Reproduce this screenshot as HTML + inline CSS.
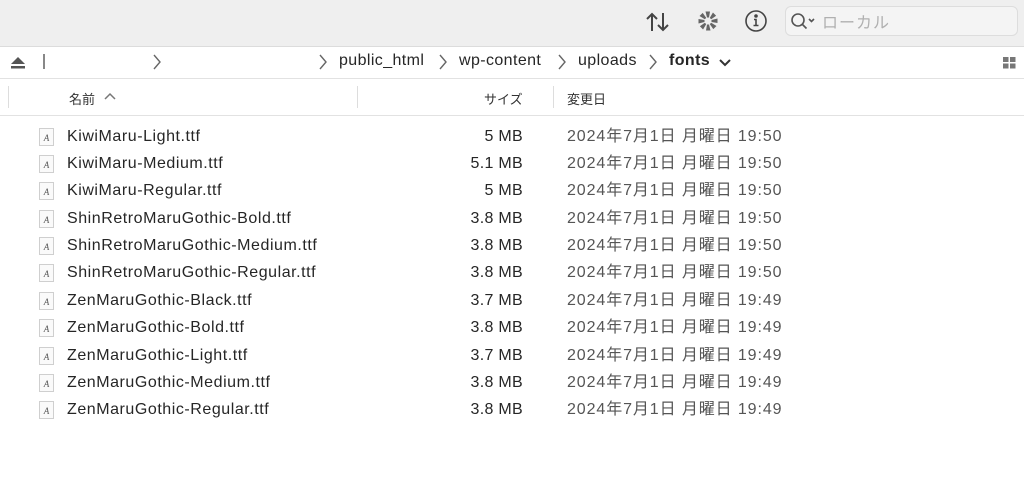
<!DOCTYPE html><html><head><meta charset="utf-8"><style>
body{margin:0;width:1024px;height:489px;background:#fff;font-family:"Liberation Sans","Noto Sans CJK JP",sans-serif;color:#262626;position:relative;overflow:hidden}
.a{position:absolute;white-space:nowrap}
.tb{position:absolute;left:0;top:0;width:1024px;height:46px;background:#efefef;border-bottom:1px solid #dcdcdc}
.pb{position:absolute;left:0;top:47px;width:1024px;height:31px;border-bottom:1px solid #e2e2e2;font-size:16px;letter-spacing:0.4px}
.hd{font-size:13px;color:#333}
.row{position:absolute;left:0;height:27px;font-size:16px;letter-spacing:0.55px;line-height:27px;width:1024px}
.ic{position:absolute;left:39px;top:5px;width:15px;height:18px;border:1px solid #cfcfcf;background:#fafafa;box-sizing:border-box;font:italic 9px "Liberation Serif",serif;color:#555;text-align:center;line-height:18px;letter-spacing:0}
.n{position:absolute;left:67px}.s{position:absolute;right:501px;letter-spacing:0.3px}.d{position:absolute;left:567px;color:#555;letter-spacing:0.9px}
.ch{position:absolute;top:7px}
</style></head><body>
<div class="tb">
<svg class="a" style="left:645px;top:11px" width="26" height="22" viewBox="0 0 26 22" fill="none" stroke="#444" stroke-width="2"><path d="M7 20V3M2 8l5-5 5 5M18 2v17M13 14l5 5 5-5"/></svg>
<svg class="a" style="left:697px;top:10px" width="22" height="22" viewBox="0 0 22 22" fill="#666"><g transform="translate(11 11)"><g id="p"><path d="M-1 -3.5 L-2.5 -9.5 L2 -9.5 L1 -3.5Z"/></g><use href="#p" transform="rotate(45)"/><use href="#p" transform="rotate(90)"/><use href="#p" transform="rotate(135)"/><use href="#p" transform="rotate(180)"/><use href="#p" transform="rotate(225)"/><use href="#p" transform="rotate(270)"/><use href="#p" transform="rotate(315)"/></g></svg>
<svg class="a" style="left:744px;top:9px" width="24" height="24" viewBox="0 0 24 24" fill="none" stroke="#444" stroke-width="1.6"><circle cx="12" cy="12" r="10"/><path d="M10 10.5h2v6M9.5 16.5h5"/><circle cx="12" cy="7" r="1" fill="#444"/></svg>
<div class="a" style="left:785px;top:6px;width:231px;height:28px;border:1px solid #ddd;border-radius:6px;background:#f4f4f4"></div>
<svg class="a" style="left:790px;top:12px" width="26" height="18" viewBox="0 0 26 18" fill="none" stroke="#555" stroke-width="1.6"><circle cx="8" cy="8" r="6"/><path d="M12.5 12.5l4 4M19 7l2.5 2.5L24 7"/></svg>
<div class="a" style="left:822px;top:9px;font-size:16px;color:#b0b0b0;letter-spacing:1px">ローカル</div>
</div>
<div class="pb">
<svg class="a" style="left:10px;top:9px" width="16" height="14" viewBox="0 0 16 14" fill="#555"><path d="M8 1L15 8H1Z"/><rect x="1" y="10" width="14" height="2.5"/></svg>
<div class="a" style="left:43px;top:7px;width:1.5px;height:15px;background:#888"></div>
<svg class="ch" style="left:152px" width="10" height="16" fill="none" stroke="#666" stroke-width="1.4"><path d="M2 1l6 7-6 7"/></svg>
<svg class="ch" style="left:318px" width="10" height="16" fill="none" stroke="#666" stroke-width="1.4"><path d="M2 1l6 7-6 7"/></svg>
<div class="a" style="left:339px;top:5px">public_html</div>
<svg class="ch" style="left:438px" width="10" height="16" fill="none" stroke="#666" stroke-width="1.4"><path d="M2 1l6 7-6 7"/></svg>
<div class="a" style="left:459px;top:5px">wp-content</div>
<svg class="ch" style="left:557px" width="10" height="16" fill="none" stroke="#666" stroke-width="1.4"><path d="M2 1l6 7-6 7"/></svg>
<div class="a" style="left:578px;top:5px">uploads</div>
<svg class="ch" style="left:648px" width="10" height="16" fill="none" stroke="#666" stroke-width="1.4"><path d="M2 1l6 7-6 7"/></svg>
<div class="a" style="left:669px;top:5px;font-weight:bold">fonts</div>
<svg class="a" style="left:719px;top:12px" width="12" height="8" viewBox="0 0 12 8" fill="none" stroke="#333" stroke-width="2"><path d="M1 1l5 5 5-5"/></svg>
<svg class="a" style="left:1003px;top:10px" width="13" height="12" fill="#777"><rect x="0" y="0" width="5.5" height="5"/><rect x="7" y="0" width="5.5" height="5"/><rect x="0" y="6.5" width="5.5" height="5"/><rect x="7" y="6.5" width="5.5" height="5"/></svg>
</div>
<div class="a" style="left:0;top:79px;width:1024px;height:36px;border-bottom:1px solid #e2e2e2"></div>
<div class="a" style="left:8px;top:86px;width:1px;height:22px;background:#ddd"></div>
<div class="a" style="left:357px;top:86px;width:1px;height:22px;background:#ddd"></div>
<div class="a" style="left:553px;top:86px;width:1px;height:22px;background:#ddd"></div>
<div class="a hd" style="left:69px;top:89px">名前</div>
<svg class="a" style="left:104px;top:92px" width="12" height="8" fill="none" stroke="#777" stroke-width="1.5"><path d="M1 7l5-5 5 5"/></svg>
<div class="a hd" style="left:484px;top:89px">サイズ</div>
<div class="a hd" style="left:567px;top:89px">変更日</div>
<div class="row" style="top:123px"><div class="ic">A</div><span class="n">KiwiMaru-Light.ttf</span><span class="s">5 MB</span><span class="d">2024年7月1日 月曜日 19:50</span></div>
<div class="row" style="top:150px"><div class="ic">A</div><span class="n">KiwiMaru-Medium.ttf</span><span class="s">5.1 MB</span><span class="d">2024年7月1日 月曜日 19:50</span></div>
<div class="row" style="top:177px"><div class="ic">A</div><span class="n">KiwiMaru-Regular.ttf</span><span class="s">5 MB</span><span class="d">2024年7月1日 月曜日 19:50</span></div>
<div class="row" style="top:205px"><div class="ic">A</div><span class="n">ShinRetroMaruGothic-Bold.ttf</span><span class="s">3.8 MB</span><span class="d">2024年7月1日 月曜日 19:50</span></div>
<div class="row" style="top:232px"><div class="ic">A</div><span class="n">ShinRetroMaruGothic-Medium.ttf</span><span class="s">3.8 MB</span><span class="d">2024年7月1日 月曜日 19:50</span></div>
<div class="row" style="top:259px"><div class="ic">A</div><span class="n">ShinRetroMaruGothic-Regular.ttf</span><span class="s">3.8 MB</span><span class="d">2024年7月1日 月曜日 19:50</span></div>
<div class="row" style="top:287px"><div class="ic">A</div><span class="n">ZenMaruGothic-Black.ttf</span><span class="s">3.7 MB</span><span class="d">2024年7月1日 月曜日 19:49</span></div>
<div class="row" style="top:314px"><div class="ic">A</div><span class="n">ZenMaruGothic-Bold.ttf</span><span class="s">3.8 MB</span><span class="d">2024年7月1日 月曜日 19:49</span></div>
<div class="row" style="top:342px"><div class="ic">A</div><span class="n">ZenMaruGothic-Light.ttf</span><span class="s">3.7 MB</span><span class="d">2024年7月1日 月曜日 19:49</span></div>
<div class="row" style="top:369px"><div class="ic">A</div><span class="n">ZenMaruGothic-Medium.ttf</span><span class="s">3.8 MB</span><span class="d">2024年7月1日 月曜日 19:49</span></div>
<div class="row" style="top:396px"><div class="ic">A</div><span class="n">ZenMaruGothic-Regular.ttf</span><span class="s">3.8 MB</span><span class="d">2024年7月1日 月曜日 19:49</span></div>
</body></html>
